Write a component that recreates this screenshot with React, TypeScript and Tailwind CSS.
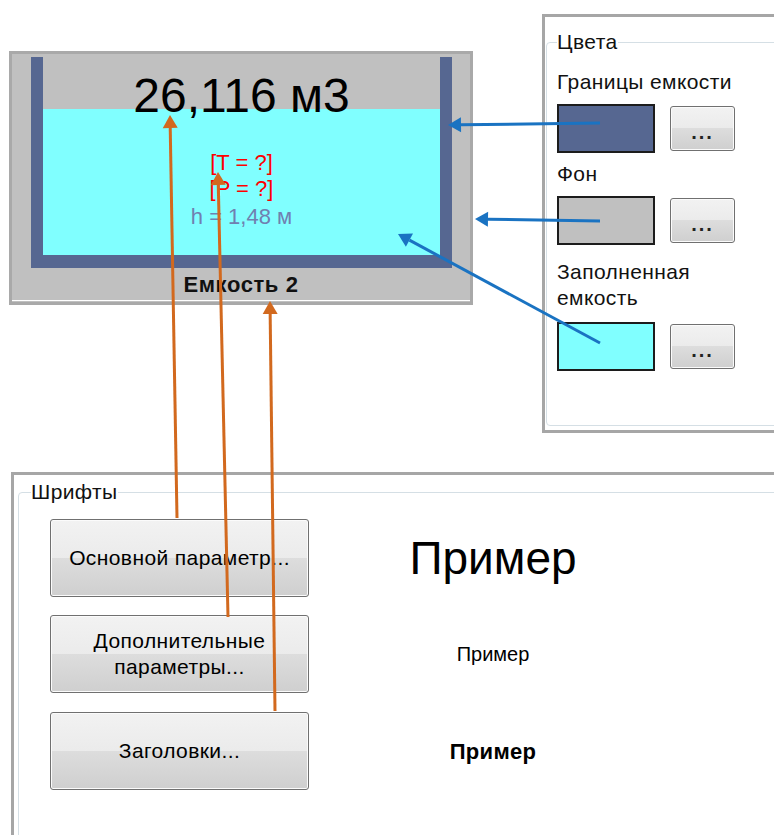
import React from "react";

const ORANGE = "#d2691e";
const BLUE = "#1a73c2";

const btnFace =
  "rounded-[3px] border border-[#707070] bg-[linear-gradient(to_bottom,#f2f2f2_0%,#ebebeb_50%,#dddddd_50%,#cfcfcf_100%)] shadow-[inset_0_0_0_1px_#fbfbfb] text-black";

const uiText = "text-[21px] leading-[26px] tracking-[0.4px] text-[#111]";

interface ArrowProps {
  x1: number;
  y1: number;
  x2: number;
  y2: number;
  color: string;
}

function Arrow({ x1, y1, x2, y2, color }: ArrowProps) {
  const len = Math.hypot(x2 - x1, y2 - y1);
  const ux = (x2 - x1) / len;
  const uy = (y2 - y1) / len;
  const headLen = 13;
  const headW = 7.5;
  const bx = x2 - ux * headLen;
  const by = y2 - uy * headLen;
  const points = `${x2},${y2} ${bx - uy * headW},${by + ux * headW} ${bx + uy * headW},${by - ux * headW}`;
  return (
    <g>
      <line x1={x1} y1={y1} x2={bx} y2={by} stroke={color} strokeWidth={3} />
      <polygon points={points} fill={color} />
    </g>
  );
}

function DotsButton() {
  return (
    <button className={`w-[65px] h-[45px] flex items-center justify-center text-[20px] leading-none tracking-[2px] font-bold ${btnFace}`}>
      <span className="mt-[6px] text-[#222]">...</span>
    </button>
  );
}

function Swatch({ color }: { color: string }) {
  return <div className={`w-[98px] h-[49px] border-2 border-[#1c1c1c] ${color}`} />;
}

function Tank() {
  return (
    <div className="ml-[9px] mt-[51px] w-[464px] h-[254px] shrink-0 border-[3px] border-[#a9a9a9] bg-[#c0c0c0] flex flex-col">
      <div className="ml-[19px] mt-[3px] w-[421px] h-[211px] border-x-[12px] border-b-[13px] border-[#566791] flex flex-col">
        <div className="relative z-10 h-[52px] bg-[#c0c0c0] pt-[15px] text-center text-[48px] leading-none whitespace-nowrap text-black">
          26,116 м3
        </div>
        <div className="flex-1 bg-[#80ffff] pt-[41px] flex flex-col items-center text-[22px] leading-[26px] whitespace-nowrap">
          <div className="text-[#ff0000]">[T = ?]</div>
          <div className="text-[#ff0000]">[P = ?]</div>
          <div className="mt-[2px] text-[#7080b0]">h = 1,48 м</div>
        </div>
      </div>
      <div className="h-[32px] flex items-center justify-center font-bold text-[22px] tracking-[0.6px] text-[#111]">Емкость 2</div>
      <div className="h-px bg-white" />
    </div>
  );
}

function ColorsPanel() {
  return (
    <div className="ml-[69px] mt-[14px] w-[240px] h-[419px] shrink-0 border-[3px] border-[#a6a6a6] bg-white">
      <fieldset className="ml-[1px] mt-[12px] w-[260px] h-[397px] border border-[#d5dfe5] rounded-[4px] px-[10px]">
        <legend className={uiText}>Цвета</legend>
        <div className={`mt-[14px] ${uiText}`}>Границы емкости</div>
        <div className="mt-[9px] flex items-center gap-[15px]">
          <Swatch color="bg-[#566791]" />
          <DotsButton />
        </div>
        <div className={`mt-[8px] ${uiText}`}>Фон</div>
        <div className="mt-[9px] flex items-center gap-[15px]">
          <Swatch color="bg-[#c0c0c0]" />
          <DotsButton />
        </div>
        <div className={`mt-[14px] ${uiText}`}>
          Заполненная
          <br />
          емкость
        </div>
        <div className="mt-[11px] flex items-center gap-[15px]">
          <Swatch color="bg-[#80ffff]" />
          <DotsButton />
        </div>
      </fieldset>
    </div>
  );
}

function FontsPanel() {
  const rows = [
    { label: ["Основной параметр..."], sample: "text-[46px] font-normal", gap: "mt-[14px]" },
    { label: ["Дополнительные", "параметры..."], sample: "text-[20px] font-normal", gap: "mt-[18px]" },
    { label: ["Заголовки..."], sample: "text-[22px] font-bold tracking-[0.3px]", gap: "mt-[19px]" },
  ];
  return (
    <div className="ml-[11px] mt-[39px] w-[780px] h-[400px] shrink-0 border-[3px] border-[#a6a6a6] bg-white">
      <fieldset className="ml-[4px] mt-[4px] w-[800px] h-[420px] border border-[#d5dfe5] rounded-[4px] pl-[12px]">
        <legend className={uiText}>Шрифты</legend>
        {rows.map((r, i) => (
          <div key={i} className={`${r.gap} flex items-center`}>
            <button className={`ml-[19px] w-[259px] h-[78px] flex flex-col items-center justify-center ${uiText} ${btnFace}`}>
              {r.label.map((l) => (
                <span key={l}>{l}</span>
              ))}
            </button>
            <div className={`w-[368px] text-center text-black ${r.sample}`}>Пример</div>
          </div>
        ))}
      </fieldset>
    </div>
  );
}

export default function App() {
  return (
    <div className="relative w-[774px] h-[835px] overflow-hidden bg-white font-['Liberation_Sans',Arial,sans-serif]">
      <div className="flex items-start">
        <Tank />
        <ColorsPanel />
      </div>
      <FontsPanel />

      {/* annotation arrows */}
      <svg className="absolute inset-0 pointer-events-none" width={774} height={835}>
        <Arrow x1={177} y1={518} x2={170} y2={115} color={ORANGE} />
        <Arrow x1={228} y1={617} x2={218} y2={172} color={ORANGE} />
        <Arrow x1={275} y1={711} x2={270} y2={301} color={ORANGE} />
        <Arrow x1={600} y1={123} x2={448} y2={125} color={BLUE} />
        <Arrow x1={600} y1={221} x2={475} y2={219} color={BLUE} />
        <Arrow x1={600} y1={343} x2={398} y2={234} color={BLUE} />
      </svg>
    </div>
  );
}
